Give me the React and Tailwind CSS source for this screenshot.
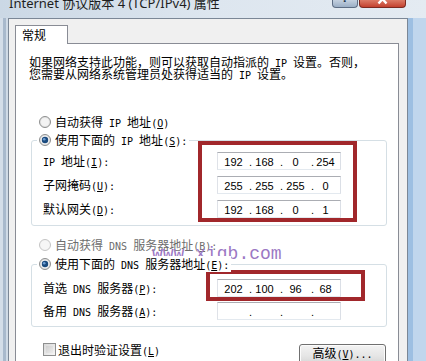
import React from "react";

function M({ children }) {
  return <span className="font-['DejaVu_Sans_Mono',monospace] text-[10px] leading-[8px]">{children}</span>;
}

function T({ s }) {
  const parts = s.split(/([\x20-\x7e]+)/);
  return (
    <>
      {parts.map((p, i) =>
        p === "" ? null : /^[\x20-\x7e]+$/.test(p) ? <M key={i}>{p}</M> : <span key={i}>{p}</span>
      )}
    </>
  );
}

function L({ s, k, tail = "" }) {
  return (
    <span className="whitespace-pre">
      <T s={s} />
      <M>
        (<u>{k}</u>){tail}
      </M>
    </span>
  );
}

function Radio({ checked = false, disabled = false }) {
  return (
    <svg width="12" height="12" viewBox="0 0 12 12" className="shrink-0">
      <circle cx="6" cy="6" r="5.5" fill={disabled ? "#f4f4f4" : "#e4e4e4"} stroke={disabled ? "#c4c4c4" : "#8e8f8f"} />
      <circle cx="6" cy="6" r="4" fill={disabled ? "#f6f6f6" : "#f3f3f3"} />
      {checked && (
        <>
          <circle cx="6" cy="6" r="3.2" fill="#1a4a7e" />
          <circle cx="5.2" cy="5.2" r="1.3" fill="#6f9fd4" />
        </>
      )}
    </svg>
  );
}

function IpField({ vals = ["", "", "", ""] }) {
  const widths = ["w-[31px]", "w-[31px]", "w-[31px]", "w-[29px]"];
  return (
    <div className="flex h-[18px] w-[124px] shrink-0 border border-[#abadb3] border-l-[#dfe2e8] border-r-[#dbdfe6] border-b-[#e3e9ef] bg-white font-['Liberation_Sans',sans-serif] text-[11px] leading-[16px] text-black">
      {vals.map((v, i) => (
        <div key={i} className={`relative flex justify-center ${widths[i]}`}>
          {i > 0 && <span className="absolute left-0 top-[1px]">.</span>}
          <span className="pt-[1px]">{v}</span>
        </div>
      ))}
    </div>
  );
}

function Row({ label, vals }) {
  return (
    <div className="flex h-[18px] items-center">
      <div className="w-[174px] whitespace-nowrap leading-[14px]">{label}</div>
      <IpField vals={vals} />
    </div>
  );
}

export default function App() {
  return (
    <div className="relative flex h-[361px] w-[426px] flex-col overflow-hidden bg-[#d6e1ec] font-['Noto_Sans_CJK_SC',sans-serif] text-[12px] text-black">
      {/* title bar */}
      <div className="flex h-[18px] shrink-0 items-start bg-gradient-to-r from-[#cbd8e5] via-[#dde6ef] to-[#e4ebf2]">
        <div className="ml-[9px] mt-[-5px] whitespace-nowrap font-['Noto_Sans','Noto_Sans_CJK_SC',sans-serif] text-[13px] leading-[16px] text-[#1e1e1e]">
          Internet 协议版本 4 (TCP/IPv4) 属性
        </div>
        <div className="ml-auto mr-[20px] flex gap-[1px]">
          <div className="relative flex h-[8px] w-[26px] justify-center overflow-hidden rounded-b-[4px] border border-t-0 border-[#5d6d84] bg-gradient-to-b from-[#c3d0df] to-[#9cafc6]">
            <span className="absolute top-[-9px] font-['Liberation_Sans',sans-serif] text-[13px] font-bold leading-[14px] text-[#253549]">?</span>
          </div>
          <div className="h-[8px] w-[47px] overflow-hidden rounded-b-[4px] border border-t-0 border-[#7d2a20] bg-gradient-to-b from-[#dc7a66] to-[#c3402e]">
            <svg width="45" height="7" viewBox="0 0 45 7">
              <path d="M22.5 -1 L18.5 3.5 M22.5 -1 L26.5 3.5" stroke="#ffffff" strokeWidth="2.4" fill="none" />
            </svg>
          </div>
        </div>
      </div>

      <div className="flex min-h-0 flex-1">
        {/* left frame */}
        <div className="flex w-[8px] shrink-0">
          <div className="w-[3px] bg-[#d3dde8]" />
          <div className="w-[3px] bg-[#a8b9cc]" />
          <div className="w-[2px] bg-[#cfdae6]" />
        </div>

        {/* window body */}
        <div className="flex w-[400px] shrink-0 flex-col border border-b-0 border-[#7b8796] bg-[#f0f0f0] pl-[6px] pr-[8px] pt-[6px]">
          <div className="relative z-10 -mb-px h-[19px] w-[53px] border border-b-0 border-[#898c95] bg-white pl-[6px] leading-[18px]">
            常规
          </div>
          <div className="flex h-[340px] shrink-0 flex-col border border-[#898c95] bg-white">
            <div className="flex flex-col pl-[13px] pt-[12px]">
              <div className="h-[12px] whitespace-pre leading-[12px]">
                <T s="如果网络支持此功能，则可以获取自动指派的 IP 设置。否则，" />
              </div>
              <div className="h-[12px] whitespace-pre leading-[12px]">
                <T s="您需要从网络系统管理员处获得适当的 IP 设置。" />
              </div>
            </div>

            <div className="ml-[23px] mt-[34px] flex h-[16px] items-center gap-[4px] leading-[14px]">
              <Radio />
              <L s="自动获得 IP 地址" k="O" />
            </div>

            <div className="mt-[2px] flex flex-col pl-[15px] pr-[11px]">
              <div className="relative z-10 ml-[6px] flex h-[16px] items-center gap-[4px] self-start bg-white px-[2px] leading-[14px]">
                <Radio checked />
                <L s="使用下面的 IP 地址" k="S" tail=":" />
              </div>
              <div className="-mt-[8px] flex flex-col gap-[6px] rounded-[3px] border border-[#d5dfe5] pb-[7px] pl-[11px] pt-[11px]">
                <Row label={<L s="IP 地址" k="I" tail=":" />} vals={["192", "168", "0", "254"]} />
                <Row label={<L s="子网掩码" k="U" tail=":" />} vals={["255", "255", "255", "0"]} />
                <Row label={<L s="默认网关" k="D" tail=":" />} vals={["192", "168", "0", "1"]} />
              </div>
            </div>

            <div className="ml-[23px] mt-[11px] flex h-[16px] items-center gap-[4px] leading-[14px] text-[#6d6d6d]">
              <Radio disabled />
              <L s="自动获得 DNS 服务器地址" k="B" tail=":" />
            </div>

            <div className="mt-[3px] flex flex-col pl-[15px] pr-[11px]">
              <div className="relative z-10 ml-[6px] flex h-[16px] items-center gap-[4px] self-start bg-white px-[2px] leading-[14px]">
                <Radio checked />
                <L s="使用下面的 DNS 服务器地址" k="E" tail=":" />
              </div>
              <div className="-mt-[8px] flex flex-col gap-[5px] rounded-[3px] border border-[#d5dfe5] pb-[6px] pl-[11px] pt-[14px]">
                <Row label={<L s="首选 DNS 服务器" k="P" tail=":" />} vals={["202", "100", "96", "68"]} />
                <Row label={<L s="备用 DNS 服务器" k="A" tail=":" />} vals={["", "", "", ""]} />
              </div>
            </div>

            <div className="mt-[16px] flex items-start justify-between pl-[27px] pr-[12px]">
              <div className="flex h-[13px] items-center gap-[2px]">
                <div className="h-[13px] w-[13px] shrink-0 border border-[#8e8f8f] bg-gradient-to-br from-[#d8d8d8] to-[#f6f6f6] p-[2px]">
                  <div className="h-full w-full bg-gradient-to-br from-[#cfcfcf] to-[#ececec]" />
                </div>
                <span className="leading-[13px]">
                  <L s="退出时验证设置" k="L" />
                </span>
              </div>
              <div className="mt-[1px] flex h-[23px] w-[87px] justify-center rounded-[3px] border border-[#707070] bg-gradient-to-b from-[#f3f3f3] via-[#e6e6e6] to-[#d2d2d2] pt-[1px] leading-[14px] shadow-[inset_0_0_0_1px_#fcfcfc]">
                <L s="高级" k="V" tail="..." />
              </div>
            </div>
          </div>
        </div>

        {/* right frame */}
        <div className="flex w-[18px] shrink-0">
          <div className="w-[5px] bg-[#9dbfe2]" />
          <div className="flex-1 bg-[#c0d6ed]" />
        </div>
      </div>

      {/* watermark */}
      <div className="pointer-events-none absolute left-[152px] top-[245px] whitespace-nowrap font-['Liberation_Mono',monospace] text-[18px] leading-[18px] text-[#9b78c4]">
        www.xiqb.com
      </div>

      {/* red annotation boxes */}
      <div className="pointer-events-none absolute left-[198px] top-[141px] h-[81px] w-[159px] border-[4px] border-[#a1272b]" />
      <div className="pointer-events-none absolute left-[206px] top-[270px] h-[31px] w-[159px] border-[4px] border-[#a1272b]" />
    </div>
  );
}
